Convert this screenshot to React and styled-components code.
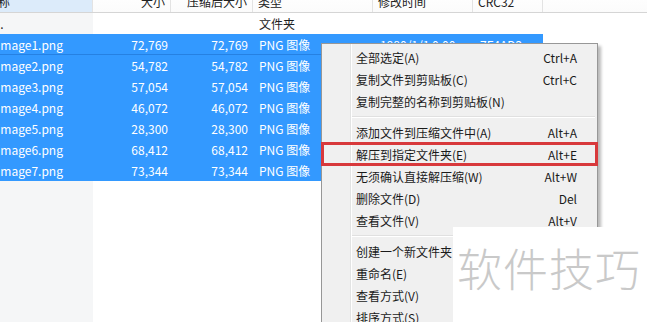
import styled, { createGlobalStyle } from 'styled-components'

const GlobalStyle = createGlobalStyle`
  html, body {
    margin: 0;
    padding: 0;
    background: #fff;
    overflow: hidden;
  }
  body {
    font-family: "Noto Sans CJK SC", "Noto Sans", sans-serif;
    font-size: 12px;
    color: #1e1e1e;
  }
`

const columns = '101px 78px 82px 120px 100px 70px 1fr'

const files = [
  { name: 'image1.png', size: '72,769', packed: '72,769', crc: '7F4AD2' },
  { name: 'image2.png', size: '54,782', packed: '54,782', crc: '3B91C0E4' },
  { name: 'image3.png', size: '57,054', packed: '57,054', crc: 'A02D6F18' },
  { name: 'image4.png', size: '46,072', packed: '46,072', crc: '5C7E3B90' },
  { name: 'image5.png', size: '28,300', packed: '28,300', crc: 'D14A8E27' },
  { name: 'image6.png', size: '68,412', packed: '68,412', crc: '9E06B5C3' },
  { name: 'image7.png', size: '73,344', packed: '73,344', crc: '41F8D2A6' },
]

const menu = [
  { label: '全部选定(A)', key: 'Ctrl+A' },
  { label: '复制文件到剪贴板(C)', key: 'Ctrl+C' },
  { label: '复制完整的名称到剪贴板(N)' },
  'sep',
  { label: '添加文件到压缩文件中(A)', key: 'Alt+A' },
  { label: '解压到指定文件夹(E)', key: 'Alt+E', marked: true },
  { label: '无须确认直接解压缩(W)', key: 'Alt+W' },
  { label: '删除文件(D)', key: 'Del' },
  { label: '查看文件(V)', key: 'Alt+V' },
  'sep',
  { label: '创建一个新文件夹' },
  { label: '重命名(E)' },
  { label: '查看方式(V)' },
  { label: '排序方式(S)' },
]

export default function App() {
  return (
    <Page>
      <GlobalStyle />
      <List>
        <Header>
          <HeadCell $sorted><NameHead>名称</NameHead></HeadCell>
          <HeadCell $right>大小</HeadCell>
          <HeadCell $right>压缩后大小</HeadCell>
          <HeadCell>类型</HeadCell>
          <HeadCell>修改时间</HeadCell>
          <HeadCell>CRC32</HeadCell>
          <HeadCell $last />
        </Header>
        <Row>
          <NameCell>..</NameCell>
          <Cell />
          <Cell />
          <Cell $pad={6}>文件夹</Cell>
          <Cell />
          <Cell />
          <Cell />
        </Row>
        {files.map((f, i) => (
          <Row key={f.name} $selected $focused={i === 0}>
            <NameCell $selected>{f.name}</NameCell>
            <Cell $right>{f.size}</Cell>
            <Cell $right $padRight={5}>{f.packed}</Cell>
            <Cell $pad={6}>PNG 图像</Cell>
            <Cell $pad={7}>1980/1/1 0:00</Cell>
            <Cell $pad={7}>{f.crc}</Cell>
            <Tail />
          </Row>
        ))}
        <Filler>
          <NameFill />
          <div />
        </Filler>
      </List>

      <Menu>
        {menu.map((m, i) =>
          m === 'sep' ? (
            <Separator key={i} />
          ) : (
            <Item key={i} $marked={m.marked}>
              <span>{m.label}</span>
              {m.key && <Shortcut>{m.key}</Shortcut>}
            </Item>
          )
        )}
      </Menu>

      <Watermark>软件技巧</Watermark>
    </Page>
  )
}

const Page = styled.div`
  position: relative;
  width: 647px;
  height: 322px;
  overflow: hidden;
  background: #fff;
`

const List = styled.div`
  margin: -9px 0 0 -8px;
  display: flex;
  flex-direction: column;
`

const Header = styled.div`
  display: grid;
  grid-template-columns: ${columns};
  height: 21px;
  border-bottom: 1px solid #d5d5d5;
  background: linear-gradient(#ffffff, #fbfbfb);
`

const HeadCell = styled.div`
  display: flex;
  align-items: center;
  justify-content: ${(p) => (p.$right ? 'flex-end' : 'flex-start')};
  padding: 0 ${(p) => (p.$right ? '5px' : '0')} 0 ${(p) => (p.$right ? '0' : '5px')};
  border-right: ${(p) => (p.$last ? 'none' : '1px solid #e3e3e3')};
  background: ${(p) => (p.$sorted ? '#dcebfa' : 'transparent')};
  color: #222;
  white-space: nowrap;
  overflow: hidden;
`

const NameHead = styled.span`
  margin-left: -11px;
`

const Row = styled.div`
  display: grid;
  grid-template-columns: ${columns};
  height: 21px;
  line-height: 21px;
  background: ${(p) => (p.$selected ? '#3399ff' : 'transparent')};
  color: ${(p) => (p.$selected ? '#fff' : '#1e1e1e')};
  white-space: nowrap;
  ${(p) => (p.$focused ? 'box-shadow: inset 0 -1px 0 rgba(0, 60, 140, 0.25);' : '')}
`

const Cell = styled.div`
  overflow: hidden;
  text-align: ${(p) => (p.$right ? 'right' : 'left')};
  padding-left: ${(p) => (p.$pad ?? 0)}px;
  padding-right: ${(p) => (p.$right ? (p.$padRight ?? 3) : 0)}px;
`

const NameCell = styled(Cell)`
  padding-left: 5px;
  background: ${(p) => (p.$selected ? 'transparent' : '#f5f6f7')};
`

const Tail = styled.div`
  background: #fff;
`

const Filler = styled.div`
  display: grid;
  grid-template-columns: 101px 1fr;
  height: 160px;
`

const NameFill = styled.div`
  background: #f5f6f7;
`

const Menu = styled.div`
  position: absolute;
  left: 321px;
  top: 43px;
  width: 275px;
  padding: 2px 0;
  border: 1px solid #979797;
  background:
    linear-gradient(to right, transparent 28px, #e2e3e3 28px, #e2e3e3 29px, #ffffff 29px, #ffffff 30px, transparent 30px),
    #f0f0f0;
  box-shadow: 3px 3px 3px rgba(0, 0, 0, 0.28);
  display: flex;
  flex-direction: column;
  color: #1a1a1a;
`

const Item = styled.div`
  display: flex;
  justify-content: space-between;
  align-items: center;
  height: 22px;
  padding: 0 20px 0 34px;
  white-space: nowrap;
  ${(p) => (p.$marked ? 'outline: 3px solid #d8393c; outline-offset: -2px;' : '')}
`

const Shortcut = styled.span`
  color: #1a1a1a;
`

const Separator = styled.div`
  margin: 4px 2px 3px 30px;
  height: 1px;
  background: #e0e0e0;
  border-bottom: 1px solid #ffffff;
`

const Watermark = styled.div`
  position: absolute;
  left: 453px;
  top: 227px;
  right: 0;
  bottom: 0;
  background: #fff;
  padding: 11px 0 0 4px;
  font-size: 45px;
  font-weight: 300;
  line-height: 60px;
  color: #c9c9c9;
  letter-spacing: 1px;
  white-space: nowrap;
`
